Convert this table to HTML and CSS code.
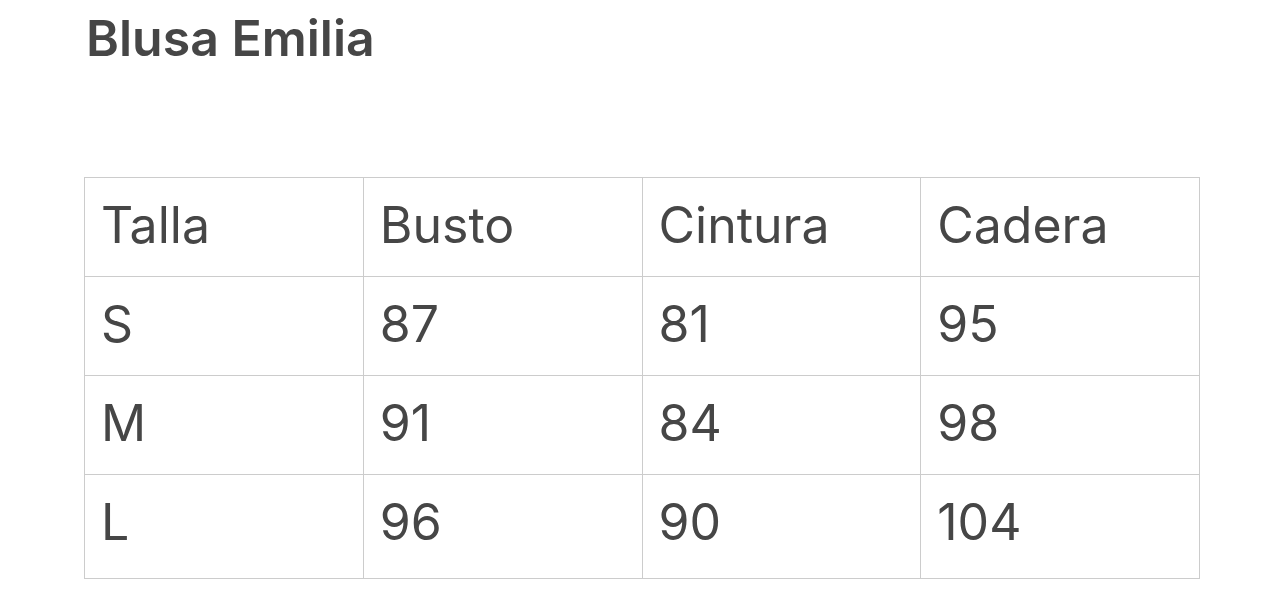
FILE: index.html
```html
<!DOCTYPE html>
<html lang="es">
<head>
<meta charset="utf-8">
<title>Blusa Emilia</title>
<link rel="stylesheet" href="styles.css">
</head>
<body>
<main class="page">
  <h1 class="title">Blusa Emilia</h1>
  <table class="sizes">
    <tr><td>Talla</td><td>Busto</td><td>Cintura</td><td>Cadera</td></tr>
    <tr><td>S</td><td>87</td><td>81</td><td>95</td></tr>
    <tr><td>M</td><td>91</td><td>84</td><td>98</td></tr>
    <tr class="last"><td>L</td><td>96</td><td>90</td><td>104</td></tr>
  </table>
</main>
</body>
</html>
```
FILE: styles.css
```css
html, body {
  margin: 0;
  padding: 0;
  background: #ffffff;
}
body {
  font-family: Inter, "Noto Sans", sans-serif;
  color: #464646;
}
.page {
  padding: 0 84px 0 84px;
}
.title {
  margin: 0;
  padding-top: 10px;
  padding-left: 2px;
  font-size: 50px;
  font-weight: 600;
  line-height: 56px;
  letter-spacing: 0;
}
.sizes {
  margin-top: 111px;
  width: 1116px;
  border-collapse: collapse;
  table-layout: fixed;
}
.sizes td {
  border: 1px solid #cccccc;
  height: 99px;
  padding: 0 0 4px 16px;
  font-size: 50px;
  font-weight: 400;
  line-height: 1;
  vertical-align: middle;
  box-sizing: border-box;
}
.sizes tr.last td {
  height: 104px;
  padding-bottom: 10px;
}
```
